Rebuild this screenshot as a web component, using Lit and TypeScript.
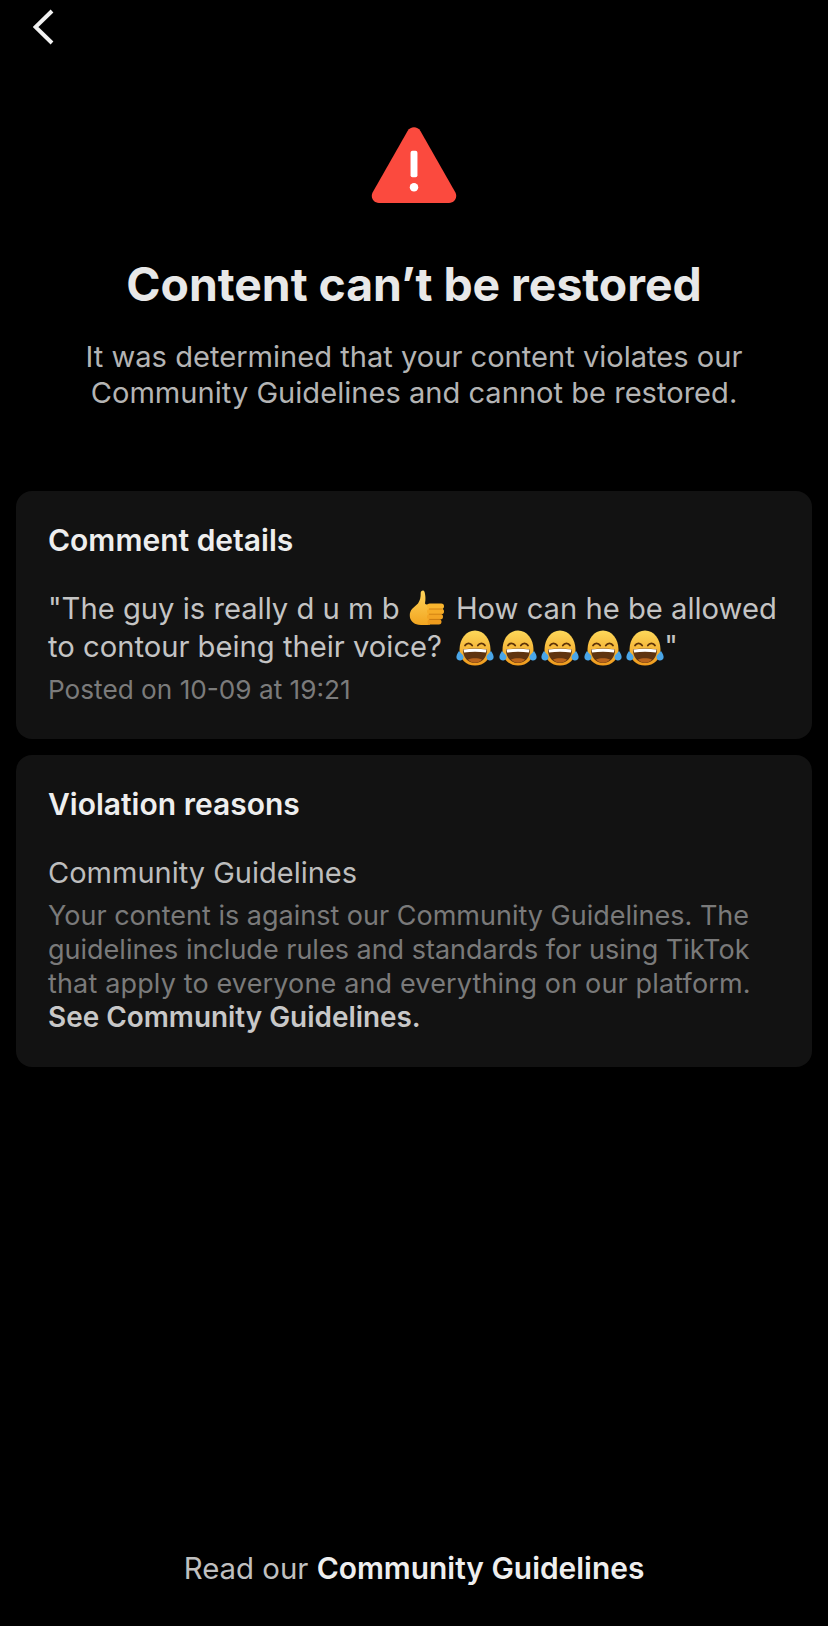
import { LitElement, html, css, svg } from 'lit';
import { customElement } from 'lit/decorators.js';

const thumb = html`<svg class="emoji thumb" viewBox="0 0 36 36">
  <defs>
    <linearGradient id="th" x1="0" y1="0" x2="0" y2="1">
      <stop offset="0" stop-color="#ffd45a" />
      <stop offset="1" stop-color="#f2a520" />
    </linearGradient>
  </defs>
  <path fill="url(#th)" d="M14 .5c-1.400 0-2.300 1.100-2.300 2.600.1 4.200-.6 7.400-2.700 10.400L3.500 18.500C1.500 20.500.6 23 .8 26c.3 4.500 3.500 8 8.500 8.700 3.500.4 8 .4 11.700 0V14.500h-3.400c-1.200 0-1.800-.8-1.500-2 .6-2.800.4-6.200-.1-8.500C15.700 2 15.300.5 14 .5z" />
  <rect x="18" y="13.500" width="17" height="5.600" rx="2.800" fill="#f9b52e" />
  <rect x="18" y="18.800" width="17" height="5.400" rx="2.700" fill="#f6ac27" />
  <rect x="18" y="24" width="16" height="5.400" rx="2.700" fill="#f3a423" />
  <rect x="18.500" y="29.200" width="14" height="5.200" rx="2.600" fill="#ee9b1d" />
  <path d="M20 19h13M20 24.200h13M20 29.400h11" stroke="#c97a10" stroke-width=".8" fill="none" />
</svg>`;

const joyPaths = svg`
  <path d="M19 .5C28 .5 34.500 9 34.500 20 34.500 29.500 28 35.500 19 35.500S3.500 29.500 3.500 20C3.500 9 10 .5 19 .5z" fill="url(#jy)" />
  <path d="M9 15.500c1.600-2.800 5.400-2.800 7.200 0" stroke="#5c3208" stroke-width="1.800" fill="none" stroke-linecap="round" />
  <path d="M21.800 15.500c1.800-2.800 5.600-2.800 7.200 0" stroke="#5c3208" stroke-width="1.800" fill="none" stroke-linecap="round" />
  <path d="M7 19.500c7.500-1.400 16.500-1.400 24 0 0 8-4.800 13.500-12 13.500S7 27.500 7 19.500z" fill="#5f3410" />
  <path d="M7.500 19.600c7.500-1.300 15.500-1.300 23 0l-.6 3c-6.900-1.100-14.900-1.100-21.800 0z" fill="#fff" />
  <path d="M12 29.500c4-1.800 10-1.800 14 0-2 2.200-4.400 3.300-7 3.300s-5-1.100-7-3.300z" fill="#b9641c" />
  <path d="M3 21c-1.800 2.800-3 5-2.500 7 .5 2 2.700 3 4.800 2.200 2-.8 2.800-2.800 1.800-4.700z" fill="#4aa6e8" />
  <path d="M35 21c1.800 2.800 3 5 2.500 7-.5 2-2.700 3-4.800 2.200-2-.8-2.800-2.800-1.800-4.700z" fill="#4aa6e8" />
`;

const joy = html`<svg class="emoji joy" viewBox="0 0 38 36">
  <defs>
    <linearGradient id="jy" x1="0" y1="0" x2="0" y2="1">
      <stop offset="0" stop-color="#fdd85a" />
      <stop offset="1" stop-color="#ef9a1c" />
    </linearGradient>
  </defs>
  ${joyPaths}
</svg>`;

@customElement('app-root')
export class AppRoot extends LitElement {
  static styles = css`
    :host {
      display: block;
      background: #000;
      font-family: Inter, 'Liberation Sans', sans-serif;
    }

    .page {
      display: flex;
      flex-direction: column;
      height: 1626px;
      box-sizing: border-box;
      padding: 0 16px;
      overflow: hidden;
    }

    .back {
      display: block;
      width: 24px;
      height: 38px;
      margin: 8px 0 0 17px;
    }

    .hero {
      display: flex;
      flex-direction: column;
      align-items: center;
      text-align: center;
      margin-top: 81px;
    }

    .hero svg {
      display: block;
      width: 88px;
      height: 77px;
    }

    h1 {
      margin: 52px 0 0;
      font-size: 46.300px;
      line-height: 56px;
      font-weight: 700;
      color: #e8e8e8;
      white-space: nowrap;
    }

    .sub {
      margin: 27px 0 0;
      font-size: 29.100px;
      line-height: 36px;
      font-weight: 400;
      color: #b4b4b4;
    }

    .card {
      background: #121212;
      border-radius: 16px;
      padding: 31px 32px 32px;
    }

    .card + .card {
      margin-top: 16px;
    }

    .first {
      margin-top: 80px;
      height: 248px;
      box-sizing: border-box;
    }

    .second {
      height: 312px;
      box-sizing: border-box;
    }

    h2 {
      margin: 0;
      font-size: 30px;
      line-height: 36px;
      font-weight: 600;
      color: #eeeeee;
    }

    .comment {
      margin: 32px 0 0;
      font-size: 29.200px;
      line-height: 38px;
      color: #c4c4c4;
      white-space: nowrap;
    }

    .emoji {
      display: inline-block;
      vertical-align: -7px;
    }

    .thumb {
      width: 36px;
      height: 36px;
      margin: 0 11px 0 1px;
    }

    .joys {
      margin-left: 6px;
    }

    .joy {
      width: 38px;
      height: 36px;
      margin-right: 4.500px;
      vertical-align: -9px;
    }

    .joy:last-child {
      margin-right: 0;
    }

    .meta {
      margin: 8px 0 0;
      font-size: 26.200px;
      line-height: 32px;
      color: #7b7b7b;
    }

    .reason {
      margin: 32px 0 0;
      font-size: 29px;
      line-height: 38px;
      color: #bdbdbd;
    }

    .desc {
      margin: 7px 0 0;
      font-size: 27px;
      line-height: 34px;
      color: #7a7a7a;
      white-space: nowrap;
    }

    .wide {
      letter-spacing: 0.150px;
    }

    .desc b {
      display: block;
      margin-top: -1px;
      font-size: 27.900px;
      font-weight: 600;
      color: #c8c8c8;
    }

    .footer {
      margin-top: auto;
      padding-bottom: 39px;
      text-align: center;
      font-size: 29.400px;
      line-height: 36px;
      color: #c0c0c0;
    }

    .footer b {
      font-size: 29.900px;
      font-weight: 600;
      color: #eeeeee;
    }
  `;

  render() {
    return html`
      <div class="page">
        <svg class="back" viewBox="0 0 24 38" fill="none">
          <path d="M19 3 L2.500 19 L19 35" stroke="#f2f2f2" stroke-width="4" />
        </svg>

        <div class="hero">
          <svg viewBox="0 0 88 78">
            <path fill="#fb4a3e" d="M37.500 4C40.500-1 47.500-1 50.500 4L85.800 66c2.700 5-.5 11-6.300 11H8.500c-5.800 0-9-6-6.300-11z" />
            <rect x="40.500" y="24" width="7" height="27" rx="2" fill="#fff" />
            <circle cx="44" cy="61" r="4.300" fill="#fff" />
          </svg>
          <h1>Content can’t be restored</h1>
          <p class="sub">It was determined that your content violates our<br />Community Guidelines and cannot be restored.</p>
        </div>

        <section class="card first">
          <h2>Comment details</h2>
          <p class="comment">"The guy is really d u m b ${thumb}How can he be allowed<br />to contour being their voice? <span class="joys">${joy}${joy}${joy}${joy}${joy}</span>"</p>
          <p class="meta">Posted on 10-09 at 19:21</p>
        </section>

        <section class="card second">
          <h2>Violation reasons</h2>
          <p class="reason">Community Guidelines</p>
          <p class="desc">Your content is against our Community Guidelines. The<br />guidelines include rules and standards for using TikTok<br /><span class="wide">that apply to everyone and everything on our platform.</span><br /><b>See Community Guidelines.</b></p>
        </section>

        <div class="footer">Read our <b>Community Guidelines</b></div>
      </div>
    `;
  }
}
